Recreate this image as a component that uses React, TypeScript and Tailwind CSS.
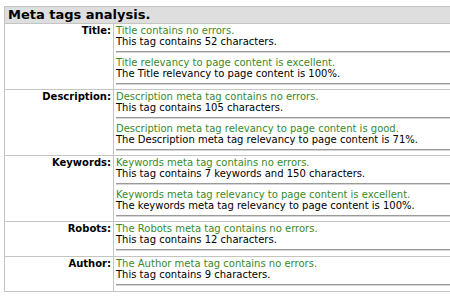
import React from 'react';

interface Check {
  status: string;
  detail: string;
}

interface TagRow {
  label: string;
  checks: Check[];
}

const rows: TagRow[] = [
  {
    label: 'Title:',
    checks: [
      { status: 'Title contains no errors.', detail: 'This tag contains 52 characters.' },
      {
        status: 'Title relevancy to page content is excellent.',
        detail: 'The Title relevancy to page content is 100%.',
      },
    ],
  },
  {
    label: 'Description:',
    checks: [
      { status: 'Description meta tag contains no errors.', detail: 'This tag contains 105 characters.' },
      {
        status: 'Description meta tag relevancy to page content is good.',
        detail: 'The Description meta tag relevancy to page content is 71%.',
      },
    ],
  },
  {
    label: 'Keywords:',
    checks: [
      {
        status: 'Keywords meta tag contains no errors.',
        detail: 'This tag contains 7 keywords and 150 characters.',
      },
      {
        status: 'Keywords meta tag relevancy to page content is excellent.',
        detail: 'The keywords meta tag relevancy to page content is 100%.',
      },
    ],
  },
  {
    label: 'Robots:',
    checks: [{ status: 'The Robots meta tag contains no errors.', detail: 'This tag contains 12 characters.' }],
  },
  {
    label: 'Author:',
    checks: [{ status: 'The Author meta tag contains no errors.', detail: 'This tag contains 9 characters.' }],
  },
];

export default function App() {
  return (
    <div className="w-[450px] h-[300px] overflow-hidden bg-white font-['DejaVu_Sans',Verdana,sans-serif]">
      <div className="mt-[6px] ml-[4px] w-[480px] border border-[#c4c4c4]">
        {/* Section header */}
        <div className="h-[16px] bg-[#dedede] pl-[3px] text-[13px] leading-[16px] font-bold text-black">
          Meta tags analysis.
        </div>

        {rows.map((row) => (
          <div key={row.label} className="flex border-t border-[#c4c4c4]">
            <div className="w-[109px] shrink-0 border-r border-[#c4c4c4] pr-[2px] pt-[1px] text-right text-[10px] leading-[11px] font-bold text-black">
              {row.label}
            </div>
            <div
              className={`flex-1 pl-[2px] pt-[1px] text-[10px] leading-[11px] ${
                row.checks.length === 1 ? 'pb-[1px]' : ''
              }`}
            >
              {row.checks.map((check) => (
                <div key={check.status}>
                  <div className="text-[#3a8a2a]">{check.status}</div>
                  <div className="text-black">{check.detail}</div>
                  <div className="my-[4px] h-[2px] border-t border-b border-t-[#9a9a9a] border-b-[#d6d6d6]" />
                </div>
              ))}
            </div>
          </div>
        ))}
      </div>
    </div>
  );
}
